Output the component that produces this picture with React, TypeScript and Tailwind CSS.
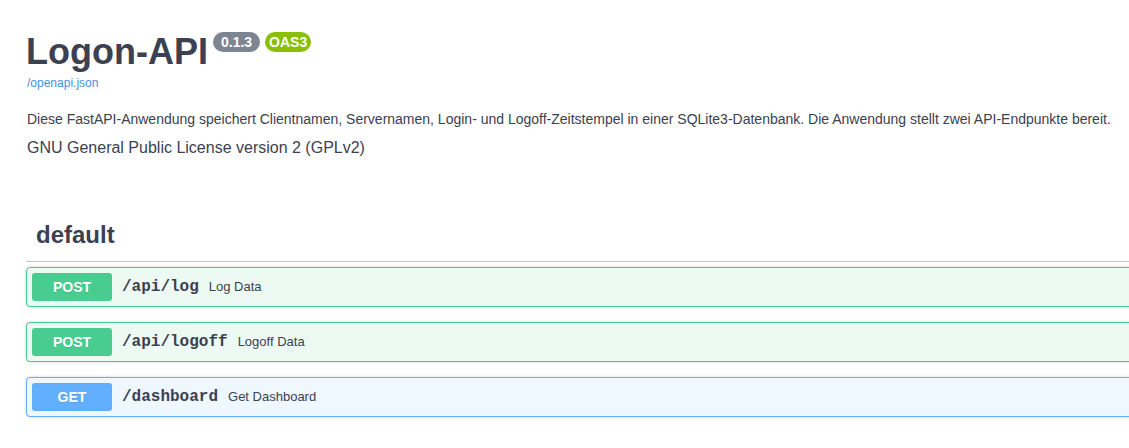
import React from "react";

const ops = [
  { method: "POST", path: "/api/log", summary: "Log Data", tone: "post" },
  { method: "POST", path: "/api/logoff", summary: "Logoff Data", tone: "post" },
  { method: "GET", path: "/dashboard", summary: "Get Dashboard", tone: "get" },
];

function OpBlock({ method, path, summary, tone }: { method: string; path: string; summary: string; tone: string }) {
  const isGet = tone === "get";
  return (
    <div
      className={
        "mb-[15px] rounded-[4px] border shadow-[0_0_3px_rgba(0,0,0,0.19)] " +
        (isGet ? "border-[#61affe] bg-[#eff7ff]" : "border-[#49cc90] bg-[#edfaf4]")
      }
    >
      <div className="flex items-center p-[5px]">
        <span
          className={
            "min-w-[80px] rounded-[3px] py-[6px] text-center text-[14px] font-bold leading-[16px] text-white [text-shadow:0_1px_0_rgba(0,0,0,0.1)] " +
            (isGet ? "bg-[#61affe]" : "bg-[#49cc90]")
          }
        >
          {method}
        </span>
        <span className="px-[10px] font-['Liberation_Mono',monospace] text-[16px] font-bold text-[#3b4151]">
          {path}
        </span>
        <span className="text-[13px] text-[#3b4151]">{summary}</span>
      </div>
    </div>
  );
}

export default function App() {
  return (
    <div className="h-[448px] w-full overflow-hidden bg-white font-['Liberation_Sans',Arial,sans-serif] text-[#3b4151]">
      <div className="w-[1500px] pl-[26px]">
        {/* info */}
        <div className="pt-[31px]">
          <div className="flex items-start">
            <h2 className="text-[36px] font-bold leading-[42px] text-[#3b4151]">Logon-API</h2>
            <span className="ml-[5px] mt-[1px] flex h-[20px] items-center rounded-full bg-[#7d8492] px-[8px] text-[14px] font-bold text-white">
              0.1.3
            </span>
            <span className="ml-[5px] mt-[1px] flex h-[20px] items-center rounded-full bg-[#89bf04] px-[4px] text-[14px] font-bold text-white">
              OAS3
            </span>
          </div>
          <a className="mt-[3px] block pl-[1px] text-[12px] leading-[14px] text-[#4990e2]">/openapi.json</a>
          <p className="mt-[19px] pl-[1px] text-[14px] leading-[20px]">
            Diese FastAPI-Anwendung speichert Clientnamen, Servernamen, Login- und Logoff-Zeitstempel in einer SQLite3-Datenbank. Die Anwendung stellt zwei API-Endpunkte bereit.
          </p>
          <p className="mt-[9px] pl-[1px] text-[16px] leading-[20px]">GNU General Public License version 2 (GPLv2)</p>
        </div>

        {/* tag section */}
        <div className="mt-[51px]">
          <div className="mb-[5px] border-b border-[#c4c6cb] py-[10px] pl-[10px]">
            <h3 className="text-[24px] font-bold leading-[32px] text-[#3b4151]">default</h3>
          </div>
          {ops.map((op) => (
            <OpBlock key={op.path} {...op} />
          ))}
        </div>
      </div>
    </div>
  );
}
